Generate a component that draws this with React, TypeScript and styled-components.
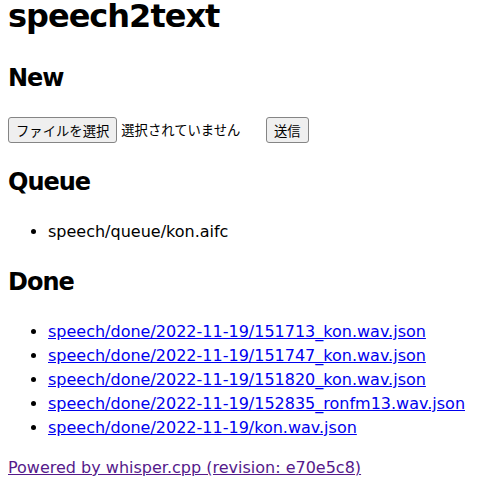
import React from "react";
import styled, { createGlobalStyle } from "styled-components";

const Global = createGlobalStyle`
  html, body {
    background: #ffffff;
  }
  body {
    margin: 0 8px;
    color: #000000;
    font-family: "DejaVu Sans", "Noto Sans CJK JP", sans-serif;
    font-size: 16px;
    line-height: 1.5;
  }
`;

const Page = styled.main`
  display: block;
`;

const Title = styled.h1`
  margin: 0 0 28.4px;
  font-size: 32px;
  line-height: 32px;
  font-weight: 700;
  letter-spacing: -1px;
`;

const Heading = styled.h2`
  margin: 19.92px 0;
  font-size: 24px;
  line-height: 36px;
  font-weight: 700;
  letter-spacing: -1px;
`;

const UploadForm = styled.form`
  display: flex;
  align-items: center;
  height: 28px;
  margin: 0;
`;

const FilePicker = styled.div`
  display: flex;
  align-items: center;
  gap: 4px;
  width: 254px;
`;

const Button = styled.button`
  box-sizing: border-box;
  height: 26px;
  margin: 0;
  padding: 0 7px;
  border: 1px solid #858585;
  border-radius: 3px;
  background: #efefef;
  color: #000000;
  font-family: "Noto Sans CJK JP", sans-serif;
  font-size: 13.33px;
  line-height: 1;
  white-space: nowrap;
`;

const SubmitButton = styled(Button)`
  margin-left: 4px;
`;

const FileStatus = styled.span`
  font-family: "Noto Sans CJK JP", sans-serif;
  font-size: 13.33px;
  white-space: nowrap;
`;

const List = styled.ul`
  margin: 16px 0;
  padding-left: 40px;
`;

const Item = styled.li`
  line-height: 24px;
`;

const Link = styled.a<{ $visited?: boolean }>`
  color: ${(p) => (p.$visited ? "#551a8b" : "#0000ee")};
  text-decoration: underline;
`;

const Footer = styled.p`
  margin: 16px 0;
`;

const done = [
  "speech/done/2022-11-19/151713_kon.wav.json",
  "speech/done/2022-11-19/151747_kon.wav.json",
  "speech/done/2022-11-19/151820_kon.wav.json",
  "speech/done/2022-11-19/152835_ronfm13.wav.json",
  "speech/done/2022-11-19/kon.wav.json",
];

export default function App() {
  return (
    <Page>
      <Global />
      <Title>speech2text</Title>
      <Heading>New</Heading>
      <UploadForm onSubmit={(e) => e.preventDefault()}>
        <FilePicker>
          <Button type="button">ファイルを選択</Button>
          <FileStatus>選択されていません</FileStatus>
        </FilePicker>
        <SubmitButton type="submit">送信</SubmitButton>
      </UploadForm>
      <Heading>Queue</Heading>
      <List>
        <Item>speech/queue/kon.aifc</Item>
      </List>
      <Heading>Done</Heading>
      <List>
        {done.map((d) => (
          <Item key={d}>
            <Link href="#">{d}</Link>
          </Item>
        ))}
      </List>
      <Footer>
        <Link href="#" $visited>
          Powered by whisper.cpp (revision: e70e5c8)
        </Link>
      </Footer>
    </Page>
  );
}
